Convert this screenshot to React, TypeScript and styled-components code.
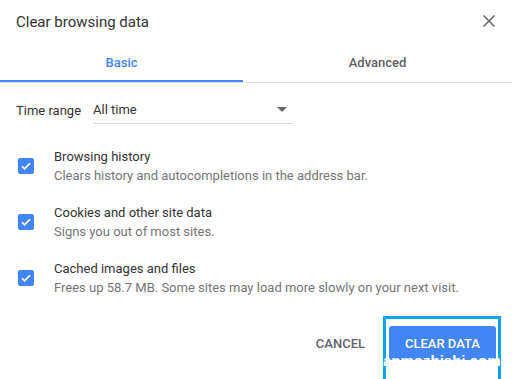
import React, { useState } from "react";
import styled, { createGlobalStyle } from "styled-components";

const GlobalStyle = createGlobalStyle`
  html, body { margin: 0; padding: 0; background: #fff; }
  body { font-family: Roboto, "Liberation Sans", Arial, sans-serif; }
`;

const Dialog = styled.div`
  width: 512px;
  height: 379px;
  background: #fff;
  display: flex;
  flex-direction: column;
  overflow: hidden;
  & > * { flex-shrink: 0; }
`;

const Header = styled.div`
  height: 42px;
  display: flex;
  align-items: center;
  justify-content: space-between;
  padding: 0 16px;
`;

const Title = styled.div`
  font-size: 15px;
  color: #333;
  padding-top: 1px;
`;

const CloseBtn = styled.button`
  border: none;
  background: none;
  padding: 0;
  width: 14px;
  height: 14px;
  display: flex;
  cursor: pointer;
`;

const TabBar = styled.div`
  display: flex;
  height: 40px;
  border-bottom: 1px solid #e0e0e0;
`;

const Tab = styled.div<{ active?: boolean }>`
  flex: ${({ active }) => (active ? "0 0 243px" : "1")};
  display: flex;
  align-items: center;
  justify-content: center;
  font-size: 13px;
  font-weight: 500;
  color: ${({ active }) => (active ? "#4285f4" : "#616161")};
  box-shadow: ${({ active }) => (active ? "inset 0 -2px 0 #4285f4" : "none")};
  padding-top: 1px;
`;

const Body = styled.div`
  padding: 0 16px;
`;

const RangeRow = styled.div`
  display: flex;
  align-items: center;
  height: 28px;
  margin-top: 13px;
  font-size: 13px;
  color: #333;
`;

const RangeLabel = styled.span`
  width: 77px;
`;

const Select = styled.div`
  width: 200px;
  height: 27px;
  border-bottom: 1px solid #dadada;
  display: flex;
  align-items: center;
  justify-content: space-between;
  padding-right: 6px;
  box-sizing: border-box;
`;

const Caret = styled.span`
  width: 0;
  height: 0;
  border-left: 5px solid transparent;
  border-right: 5px solid transparent;
  border-top: 5px solid #666;
`;

const List = styled.div`
  margin-top: 23px;
  display: flex;
  flex-direction: column;
  gap: 18px;
`;

const Row = styled.label`
  display: flex;
  align-items: center;
  height: 38px;
`;

const Box = styled.span<{ checked: boolean }>`
  width: 16px;
  height: 16px;
  margin-left: 2px;
  margin-right: 20px;
  border-radius: 2px;
  background: ${({ checked }) => (checked ? "#4285f4" : "#fff")};
  border: ${({ checked }) => (checked ? "none" : "2px solid #5f6368")};
  box-sizing: border-box;
  display: flex;
  align-items: center;
  justify-content: center;
  flex-shrink: 0;
`;

const Texts = styled.div`
  display: flex;
  flex-direction: column;
`;

const ItemTitle = styled.div`
  font-size: 13px;
  line-height: 18px;
  color: #333;
`;

const ItemDesc = styled.div`
  font-size: 13px;
  line-height: 18px;
  color: #757575;
  margin-top: 1px;
`;

const Footer = styled.div`
  margin-top: 19px;
  display: flex;
  justify-content: flex-end;
  align-items: flex-start;
  padding-right: 11px;
  gap: 18px;
`;

const Cancel = styled.button`
  border: none;
  background: none;
  font-family: inherit;
  font-size: 13px;
  font-weight: 500;
  color: #5f6368;
  padding: 0;
  margin-top: 10px;
  height: 34px;
  cursor: pointer;
`;

const Highlight = styled.div`
  position: relative;
  border: 3px solid #0aa6e6;
  border-bottom: none;
  padding: 7px 2px 30px 3px;
`;

const Primary = styled.button`
  width: 107px;
  height: 34px;
  border: none;
  border-radius: 3px;
  background: #4285f4;
  color: #fff;
  font-family: inherit;
  font-size: 13px;
  font-weight: 500;
  cursor: pointer;
  padding: 0;
`;

const Watermark = styled.span`
  position: absolute;
  left: -3px;
  top: 33px;
  font-family: "Liberation Sans", Arial, sans-serif;
  font-weight: bold;
  font-size: 15px;
  line-height: 17px;
  color: #fff;
  white-space: nowrap;
`;

const items = [
  { title: "Browsing history", desc: "Clears history and autocompletions in the address bar." },
  { title: "Cookies and other site data", desc: "Signs you out of most sites." },
  { title: "Cached images and files", desc: "Frees up 58.7 MB. Some sites may load more slowly on your next visit." },
];

const Check = () => (
  <svg width="12" height="12" viewBox="0 0 24 24">
    <path d="M4 12.5l5 5L20 6.5" fill="none" stroke="#fff" strokeWidth="3.4" />
  </svg>
);

export default function App() {
  const [checked, setChecked] = useState([true, true, true]);
  return (
    <>
      <GlobalStyle />
      <Dialog>
        <Header>
          <Title>Clear browsing data</Title>
          <CloseBtn aria-label="close">
            <svg width="14" height="14" viewBox="0 0 14 14">
              <path d="M1.5 1.5l11 11M12.5 1.5l-11 11" stroke="#6b6b6b" strokeWidth="1.6" />
            </svg>
          </CloseBtn>
        </Header>
        <TabBar>
          <Tab active>Basic</Tab>
          <Tab>Advanced</Tab>
        </TabBar>
        <Body>
          <RangeRow>
            <RangeLabel>Time range</RangeLabel>
            <Select>
              <span>All time</span>
              <Caret />
            </Select>
          </RangeRow>
          <List>
            {items.map((it, i) => (
              <Row key={it.title} onClick={() => setChecked(c => c.map((v, j) => (j == i ? !v : v)))}>
                <Box checked={checked[i]}>{checked[i] && <Check />}</Box>
                <Texts>
                  <ItemTitle>{it.title}</ItemTitle>
                  <ItemDesc>{it.desc}</ItemDesc>
                </Texts>
              </Row>
            ))}
          </List>
        </Body>
        <Footer>
          <Cancel>CANCEL</Cancel>
          <Highlight>
            <Primary>CLEAR DATA</Primary>
            <Watermark>anmozhishi.com</Watermark>
          </Highlight>
        </Footer>
      </Dialog>
    </>
  );
}
